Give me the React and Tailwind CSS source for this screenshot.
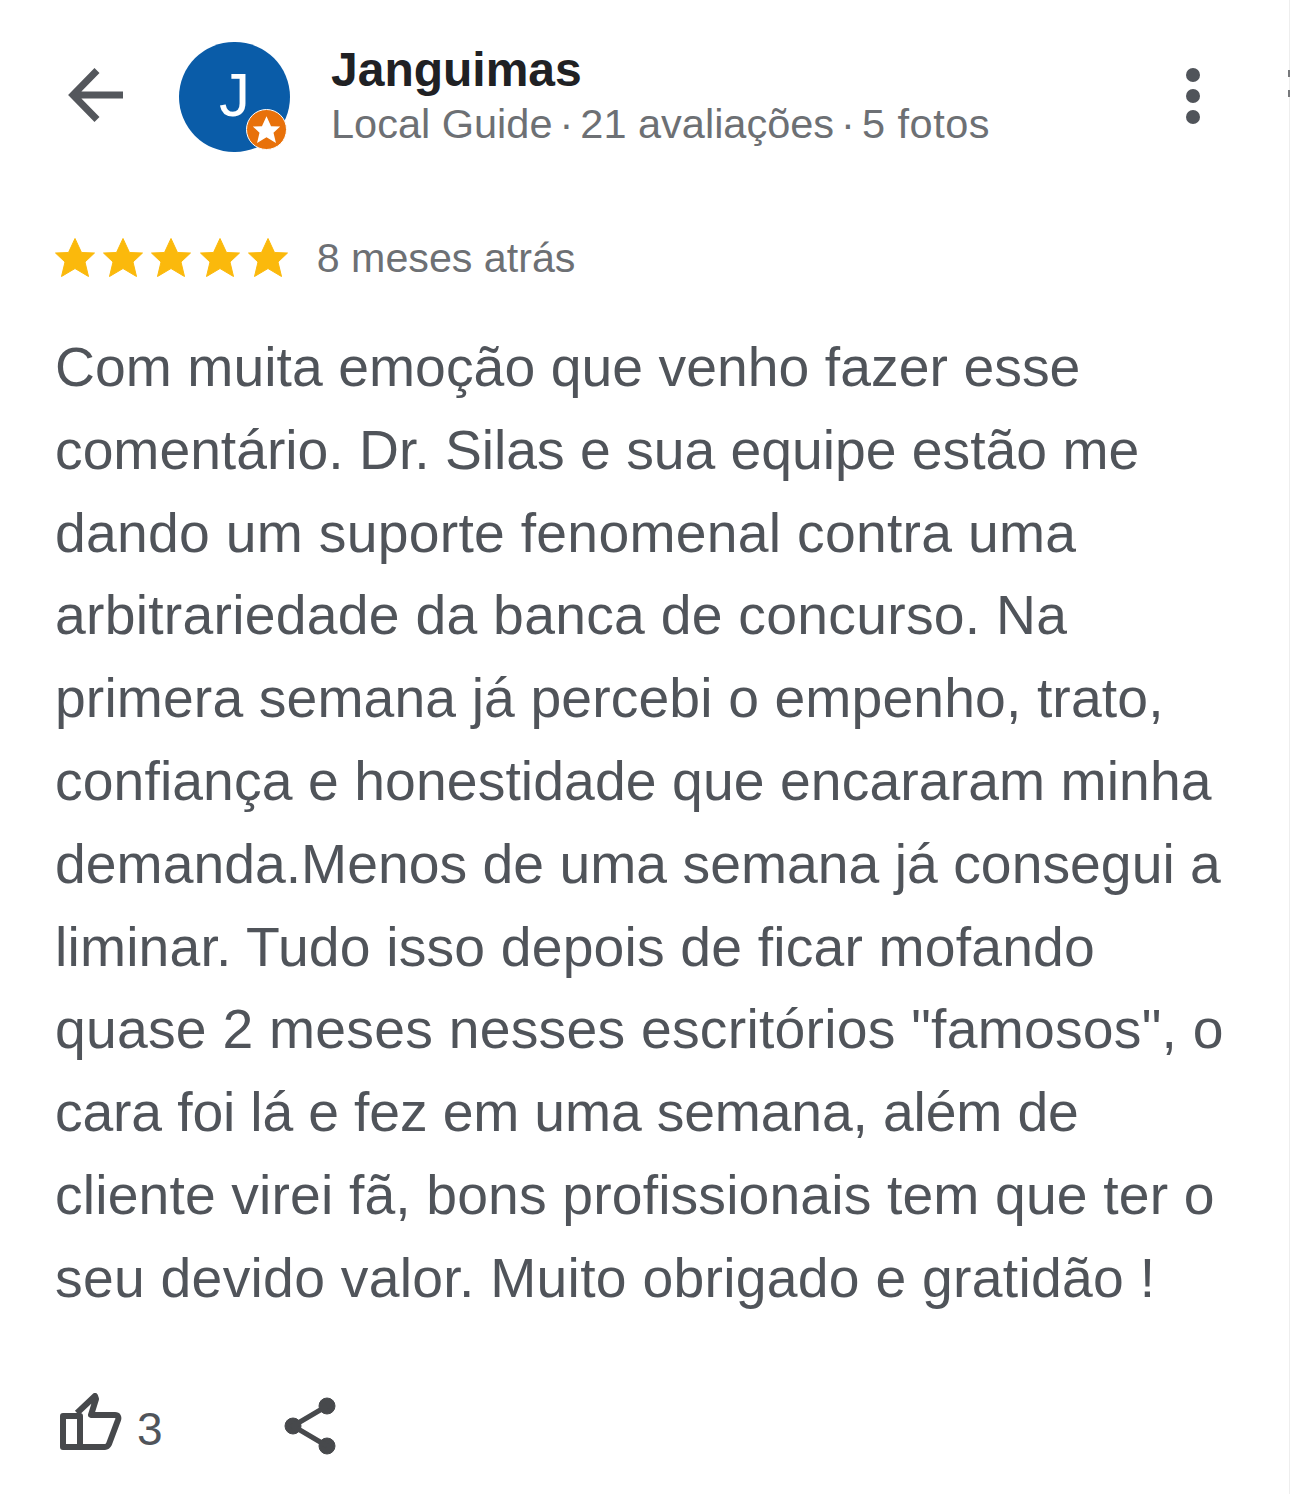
// each line carries its own tracking so the widths land where the reference's do
const lines = [
  ['Com muita emoção que venho fazer esse', 'tracking-[0.05px]'],
  ['comentário. Dr. Silas e sua equipe estão me', 'tracking-[-0.02px]'],
  ['dando um suporte fenomenal contra uma', 'tracking-[0.27px]'],
  ['arbitrariedade da banca de concurso. Na', 'tracking-[0.26px]'],
  ['primera semana já percebi o empenho, trato,', 'tracking-[0.12px]'],
  ['confiança e honestidade que encararam minha', 'tracking-[0.09px]'],
  ['demanda.Menos de uma semana já consegui a', 'tracking-[0.02px]'],
  ['liminar. Tudo isso depois de ficar mofando', 'tracking-[0.17px]'],
  ['quase 2 meses nesses escritórios "famosos", o', 'tracking-[0.24px]'],
  ['cara foi lá e fez em uma semana, além de', 'tracking-[-0.15px]'],
  ['cliente virei fã, bons profissionais tem que ter o', 'tracking-[0.14px]'],
  ['seu devido valor. Muito obrigado e gratidão !', 'tracking-[0.27px]'],
];

const starPath = 'M20 .5 26.5 14.5 39.5 15 30 24 33.5 38.5 20 30.5 6.5 38.5 10 24 .5 15 13.5 14.5Z';

function Star() {
  return (
    <svg width="40" height="40" viewBox="0 0 40 40" fill="#fbb90c">
      <path d={starPath} stroke="#fbb90c" strokeLinejoin="round" />
    </svg>
  );
}

export default function App() {
  return (
    <div className="relative w-[1290px] h-[1494px] overflow-hidden bg-white font-['Liberation_Sans',sans-serif] text-[#50545a]">
      {/* Header */}
      <div className="flex items-start pt-[42px] pl-[68px] pr-[90px]">
        <svg width="58" height="56" viewBox="0 0 58 56" fill="none" stroke="#54575c" strokeWidth="7" className="mt-[25px] shrink-0">
          <path d="M29 3.5 5 28l24 24.5M5 28h50" />
        </svg>
        <div className="relative ml-[53px] w-[111px] h-[110px] rounded-full bg-[#0a5ca8] flex items-center justify-center shrink-0">
          <span className="text-white text-[62px] leading-none mt-[-4px]">J</span>
          <div className="absolute right-[3px] bottom-[2px] w-[41px] h-[41px] rounded-full bg-[#e8710a] border border-white flex items-center justify-center">
            <svg width="29" height="28" viewBox="0 0 40 40" fill="#fff">
              <path d={starPath} />
            </svg>
          </div>
        </div>
        <div className="ml-[41px] flex-1">
          <div className="text-[48px] leading-[54px] mt-[1px] font-bold text-[#202124]">Janguimas</div>
          <div className="text-[41.5px] leading-[50px] mt-[2px] text-[#6d7074] whitespace-nowrap">
            Local Guide<span className="mx-[7px]">·</span>21 avaliações<span className="mx-[7px]">·</span><span className="tracking-[0.5px]">5 fotos</span>
          </div>
        </div>
        <div className="flex flex-col gap-[7px] mt-[26px] shrink-0">
          <div className="w-[14px] h-[14px] rounded-full bg-[#50545a]" />
          <div className="w-[14px] h-[14px] rounded-full bg-[#50545a]" />
          <div className="w-[14px] h-[14px] rounded-full bg-[#50545a]" />
        </div>
      </div>

      {/* Rating */}
      <div className="flex items-center pl-[55px] mt-[81px]">
        <div className="flex gap-[8.2px]">
          <Star /><Star /><Star /><Star /><Star />
        </div>
        <span className="ml-[29px] text-[41.2px] leading-[50px] text-[#6d7074]">8 meses atrás</span>
      </div>

      {/* Review */}
      <div className="pl-[55px] mt-[43px] text-[55.3px] leading-[82.8px] whitespace-nowrap">
        {lines.map(([line, spacing]) => (
          <div key={line} className={spacing}>{line}</div>
        ))}
      </div>

      {/* Actions */}
      <div className="flex items-start pl-[60px] mt-[73px]">
        <svg width="62" height="58" viewBox="0 0 62 58" fill="none" stroke="#47494c" strokeWidth="6" strokeLinejoin="round">
          <path d="M3 23H20V54H3Z" />
          <path d="M17 20 35 3l1 3-5 16h24c3 0 4 2 3 5L49 51c-1 2-2 3-4 3H20" />
        </svg>
        <span className="ml-[15px] mt-[13px] text-[46px] leading-none text-[#50545a]">3</span>
        <svg width="56" height="60" viewBox="0 0 56 60" fill="#47494c" stroke="#47494c" className="ml-[121px] mt-[3px]">
          <circle cx="43" cy="10" r="8" />
          <circle cx="9" cy="30" r="8" />
          <circle cx="43" cy="50" r="8" />
          <path d="M43 10 9 30l34 20" fill="none" strokeWidth="5" />
        </svg>
      </div>

      {/* Screenshot edge */}
      <div className="absolute right-0 top-0 bottom-0 w-[1px] bg-[#eeeeee]" />
      <div className="absolute right-0 top-[70px] w-[2px] h-[7px] bg-[#77797c]" />
      <div className="absolute right-0 top-[90px] w-[2px] h-[7px] bg-[#77797c]" />
    </div>
  );
}
